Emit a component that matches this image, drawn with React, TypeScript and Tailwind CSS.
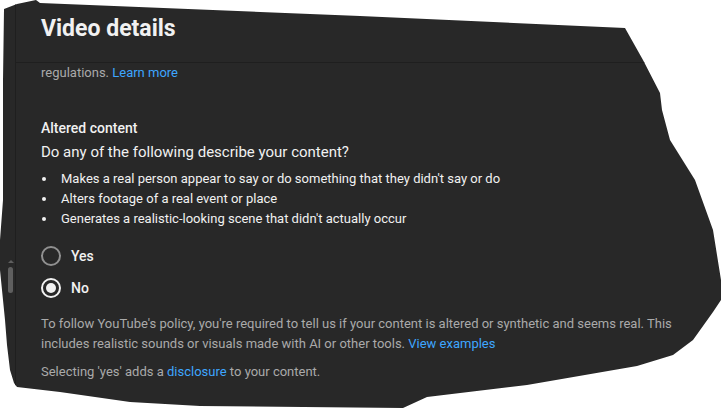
import React from "react";

const bullets = [
  "Makes a real person appear to say or do something that they didn't say or do",
  "Alters footage of a real event or place",
  "Generates a realistic-looking scene that didn't actually occur",
];

function Radio({label, checked}: {label: string; checked?: boolean}) {
  return (
    <label className="flex h-[32px] items-center gap-[10px]">
      {checked ? (
        <span className="flex h-[20px] w-[20px] items-center justify-center rounded-full border-2 border-[#f1f1f1]">
          <span className="h-[10px] w-[10px] rounded-full bg-[#f1f1f1]" />
        </span>
      ) : (
        <span className="h-[20px] w-[20px] rounded-full border-2 border-[#909090]" />
      )}
      <span className="text-[14px] leading-5 font-medium text-[#f1f1f1]">{label}</span>
    </label>
  );
}

export default function App() {
  return (
    <div className="h-[408px] w-[721px] bg-white font-['Roboto',sans-serif]">
      {/* torn-out panel */}
      <div className="flex h-full w-full bg-[#282828] [clip-path:polygon(4px_9px,17px_4px,36px_0px,40px_3px,360px_16px,625px_28px,643px_60px,660px_93px,662px_110px,670px_140px,695px_180px,713px_230px,721px_280px,721px_300px,713px_312px,693px_340px,673px_355px,637px_366px,527px_385px,427px_397px,403px_408px,200px_406px,130px_402px,60px_392px,17px_387px,14px_383px,10px_370px,7px_345px,5px_320px,3px_300px,0px_270px,0px_240px,3px_200px,3px_140px,3px_80px)]">
        {/* scrollbar strip */}
        <div className="flex w-[16px] shrink-0 flex-col items-start border-r border-[#1f1f1f] pl-[8px] pt-[260px]">
          <span className="h-0 w-0 border-x-[3px] border-b-[3px] border-x-transparent border-b-[#5f5f5f]" />
          <span className="mt-[4px] h-[26px] w-[5px] rounded-full bg-[#5f5f5f]" />
        </div>

        <div className="flex min-w-0 flex-1 flex-col">
          {/* header */}
          <div className="h-[63px] border-b border-[#1f1f1f] pl-[25px] pt-[13px]">
            <h1 className="text-[23px] leading-[32px] font-bold text-[#f1f1f1]">Video details</h1>
          </div>

          <div className="pl-[25px]">
            <p className="text-[13px] leading-5 text-[#aaaaaa]">
              regulations. <span className="text-[#3ea6ff]">Learn more</span>
            </p>

            <h2 className="mt-[35px] text-[14px] leading-5 font-medium text-[#f1f1f1]">Altered content</h2>
            <p className="mt-[2px] text-[15px] leading-6 text-[#f1f1f1]">
              Do any of the following describe your content?
            </p>

            <ul className="mt-[5px]">
              {bullets.map((b) => (
                <li key={b} className="flex items-center text-[13px] leading-5 text-[#f1f1f1]">
                  <span className="ml-[1px] mr-[15px] h-[4px] w-[4px] rounded-full bg-[#f1f1f1]" />
                  {b}
                </li>
              ))}
            </ul>

            <div className="mt-[11px] flex flex-col">
              <Radio label="Yes" />
              <Radio label="No" checked />
            </div>

            <p className="mt-[10px] w-[640px] text-[13px] leading-5 text-[#aaaaaa]">
              To follow YouTube's policy, you're required to tell us if your content is altered or synthetic and seems
              real. This includes realistic sounds or visuals made with AI or other tools.{" "}
              <span className="text-[#3ea6ff]">View examples</span>
            </p>
            <p className="mt-[8px] text-[13px] leading-5 text-[#aaaaaa]">
              Selecting 'yes' adds a <span className="text-[#3ea6ff]">disclosure</span> to your content.
            </p>
          </div>
        </div>
      </div>
    </div>
  );
}
